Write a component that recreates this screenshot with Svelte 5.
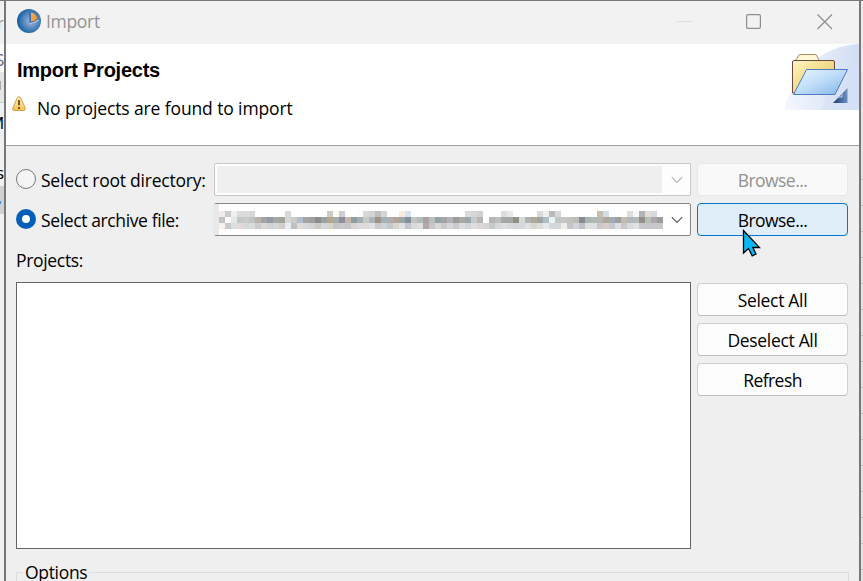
<script>
  const top = {0:'#f2eaea',1:'#cbcdcd',2:'#eef0f0',3:'#dadcdb',4:'#dadcdb',5:'#d5d8d3',11:'#d6d8d7',18:'#c8cdc8',19:'#fffff0',20:'#cdccd8',23:'#fffdf8',24:'#d8d8da',25:'#d1d4d4',26:'#bfbfbf',27:'#d5d5d5',30:'#fceadd',31:'#d5e2f0',41:'#dadcdb',42:'#dad5d5',43:'#cdd2d5',47:'#e0dfdd',48:'#e8e8e8',53:'#dadad6',54:'#f2eeea',55:'#b9b9bb',56:'#d8d8d8',63:'#c9bdb0',64:'#d2ddeb',68:'#e0dcda',69:'#f5f7fc',70:'#b2b5b5',71:'#e4ddd2',72:'#d3d8e5'};
  const mid = '#c3c2be #fff #e4e8e8 #c3c7c6 #c8cac8 #bfc5c0 #b9b2a8 #9fa5a8 #939ca1 #a4a9a8 #a3a49a #d4d7d5 #cbccc8 #aebdc9 #a3a4a4 #9f9f9e #8c8e8c #9da09e #afa894 #a4adac #8e8d9b #c4b7ad #8d9fa3 #a5afaf #c5c9c7 #aeb4b1 #9c9288 #a2b2b7 #b3adb2 #b1a598 #9ca6a7 #81919d #c3c6c2 #b6bcb9 #aaa1a8 #bcc0bc #94a3a5 #a4a5a7 #b0b4b4 #9c9c9b #a9aaa4 #9da8ad #c6cac8 #b6b7b5 #fff #b5b6b4 #bbc0bf #a6a8a4 #a6a6a5 #8f8f87 #d5dbd8 #b2b2b0 #b1a899 #9da5a9 #b3bec4 #e9f4fa #c4c6c5 #c5c7c5 #c4c2b8 #b9bdb5 #858b8f #aab3b0 #b3b9b5 #b6b8b6 #b2a699 #9faaba #9da09f #c4baaf #abb7c1 #b5bbb7 #91908b #b7bfb6 #afa6ad #999b9c'.split(' ');
  const low = '#f8f0eb #c8cacd #dcdde0 #e3d9d8 #d5d9d9 #d8dadb #cdcccc #dfd8d2 #ccd3d8 #d6d6d7 #d5ccca #e8eff3 #bfc0c1 #dedddb #d5d8da #d4d4d5 #cfcac8 #d1d8dc #d9d3c9 #c3c5c8 #c9c9c9 #c4c7c9 #d9d4d0 #dadde0 #e1dad9 #dee1e5 #cccaca #cad3d9 #c4c7cb #d9d6ce #e0e2e3 #c2c6ce #d9d9d9 #e0dfe0 #b3a7aa #c4c7cd #dbd9d6 #c8cacc #d6d7dc #cbcaca #dadcdd #cfd5da #dededf #dfd7d5 #d2d5d9 #c8c9cb #d3d8dc #dedfe0 #d8dadb #d3d7dc #d5d7de #dee0e1 #d9d5cf #dddddc #e4eaf0 #d8d8d8 #d3d8df #f3ebe6 #c3c5cb #d3d4db #bec2c7 #dfe1e0 #dfe0e0 #c8c8c8 #d8cdc9 #c6c9cf #dce0e4 #c9c9cb #d7dce1 #dfe1e3 #c9c7c9 #c5c6cb #cac7cc #c7c6c9'.split(' ');
  const cells = [...mid.map((_, i) => top[i] ?? '#fff'), ...mid, ...low];
  const lines = Array.from({ length: 16 }, (_, i) => 179 + i * 26);
</script>

{#snippet chevron(color)}
  <svg class="chev" width="12" height="8" viewBox="0 0 12 8"><path d="M.8 1.2 6 6.4 11.2 1.2" fill="none" stroke={color} stroke-width="1.1" /></svg>
{/snippet}

<div class="screen">
  <div class="behind left">
    <span class="frag" style="top:12px;color:#999">r</span>
    <i class="bg1"></i>
    <span class="frag blue" style="top:49px">S</span>
    <i class="bg2"></i>
    <i class="stub"></i>
    <span class="frag" style="top:112px;left:-11px">M</span>
    <span class="frag" style="top:162px;left:-4px">s</span>
    <i class="sel"></i>
    <i class="tick"></i>
  </div>
  <main>
    <header class="title">
      <svg class="logo" width="24" height="24" viewBox="0 0 24 24">
        <defs>
          <radialGradient id="ball" cx=".58" cy=".5" r=".6"><stop offset="0" stop-color="#a9b9e1" /><stop offset=".45" stop-color="#628fc4" /><stop offset="1" stop-color="#09599c" /></radialGradient>
          <linearGradient id="pie" x2="1" y2="1"><stop stop-color="#f3b263" /><stop offset="1" stop-color="#e8921c" /></linearGradient>
        </defs>
        <circle cx="12" cy="12" r="12" fill="url(#ball)" />
        <path d="M12.3 15V3C18 3 21 6 21.3 11Q17 15.5 12.3 15Z" fill="#416da5" />
        <path d="M14 12.5V3.4Q19.5 4.6 20.5 9.5Q17 12.8 14 12.5Z" fill="url(#pie)" />
        <path d="M12.3 14.7Q18 14 21.5 11" fill="none" stroke="#b3c2e6" stroke-width="1.5" />
      </svg>
      <span class="t name">Import</span>
      <div class="controls">
        <svg width="16" height="16" viewBox="0 0 16 16"><path d="M0 7.5H15" stroke="#dedede" /></svg>
        <svg width="16" height="16" viewBox="0 0 16 16"><rect x=".6" y=".6" width="13.8" height="13.8" rx="1.3" fill="none" stroke="#8e8e8e" stroke-width="1.2" /></svg>
        <svg width="16" height="16" viewBox="0 0 16 16"><path d="M.5.5 15 15M15 .5.5 15" stroke="#8e8e8e" stroke-width="1.2" /></svg>
      </div>
    </header>
    <section class="banner">
      <div class="copy">
        <h1>Import Projects</h1>
        <div class="msg">
          <svg width="14" height="16" viewBox="0 0 14 16"><defs><linearGradient id="warn" x2="0" y2="1"><stop stop-color="#fff0bd" /><stop offset="1" stop-color="#f6c251" /></linearGradient></defs><path d="M7 .7Q8.3.7 9 2.4L13 11.5Q14 14.4 11.7 14.5H2.3Q0 14.4 1 11.5L5 2.4Q5.700.7 7 .7Z" fill="url(#warn)" stroke="#d69b4e" /><path d="M7 4V9.2M7 11V13" stroke="#6b4a18" stroke-width="1.8" /></svg>
          <span class="t wide">No projects are found to import</span>
        </div>
      </div>
      <svg class="wizard" width="75" height="66" viewBox="0 0 75 66">
        <defs>
          <linearGradient id="haze"><stop stop-color="#f4f7fd" /><stop offset="1" stop-color="#d3def4" /></linearGradient>
          <linearGradient id="yellow" x2="1" y2="1"><stop stop-color="#fff7c8" /><stop offset=".3" stop-color="#f6e59b" /><stop offset="1" stop-color="#e5c45e" /></linearGradient>
          <linearGradient id="blue" x2="1" y2="1"><stop stop-color="#e8f6ff" /><stop offset=".5" stop-color="#bddcf8" /><stop offset="1" stop-color="#80b3e8" /></linearGradient>
          <linearGradient id="corner" x2="1"><stop stop-color="#173b78" /><stop offset="1" stop-color="#6f91c2" /></linearGradient>
        </defs>
        <path d="M0 66Q5 42 26 20Q48 1 75 0V66Z" fill="url(#haze)" />
        <path d="M38 66Q45 30 75 20V66Z" fill="#d5e0f5" opacity=".5" />
        <path d="M11 17 15.500 10.500H32L35.500 17" fill="#fff8d5" stroke="#aa8d63" />
        <path d="M8.500 49V18Q8.500 16.500 10 16.500H49Q50.500 16.500 50.500 18V49Z" fill="url(#yellow)" stroke="#6d4941" />
        <path d="M22.500 25.500H63.500L51 50.500H9.500Z" fill="url(#blue)" stroke="#5078c3" />
        <path d="M63.500 44V59H49Z" fill="url(#corner)" />
        <path d="M52 53H58V49" fill="none" stroke="#c7d7ee" />
      </svg>
    </section>
    <section class="form">
      <div class="row">
        <label><i class="radio"></i><span class="t root">Select root directory:</span></label>
        <div class="combo off"><span class="field"></span>{@render chevron('#b4b4b4')}</div>
        <button class="t tight disabled" disabled>Browse...</button>
      </div>
      <div class="row">
        <label><i class="radio on"></i><span class="t archive">Select archive file:</span></label>
        <div class="combo"><span class="edge"></span><span class="mosaic">{#each cells as c}<i style="background:{c}"></i>{/each}</span>{@render chevron('#555')}</div>
        <button class="t tight focus">Browse...</button>
      </div>
      <div class="t projects">Projects:</div>
      <div class="body">
        <div class="list"></div>
        <div class="side"><button class="t">Select All</button><button class="t">Deselect All</button><button class="t tight">Refresh</button></div>
      </div>
      <fieldset><legend class="t">Options</legend></fieldset>
    </section>
  </main>
  <div class="behind right">{#each lines as y}<i style="top:{y}px"></i>{/each}</div>
  <svg class="cursor" width="20" height="29" viewBox="0 0 20 29"><path d="M1.500 1.500V24L6.500 19.500 10.200 26.800 14 25 10.800 18.500H17.500Z" fill="#08b7f5" stroke="#000" stroke-width="1.3" /></svg>
</div>

<style>
  :global(body) { overflow: hidden; }
  .screen { position: relative; display: flex; width: 863px; height: 581px; overflow: hidden; background: #efefef; font: 18px/24px "Open Sans", "Noto Sans", sans-serif; color: #000; }
  .screen * { box-sizing: border-box; }
  svg { display: block; flex: none; }
  .t { font-size: 17.5px; letter-spacing: -.32px; white-space: nowrap; }
  .wide { letter-spacing: -.12px; }
  .root { letter-spacing: -.23px; }
  .archive { letter-spacing: -.38px; }
  .tight { letter-spacing: -.55px; }
  .behind { position: relative; flex: none; overflow: hidden; border-top: 1px solid #777; }
  .left { width: 4px; background: #eff0f2; }
  .right { width: 2px; background: linear-gradient(#ececec 71px, #e4e4e4 72px); }
  .behind i { position: absolute; left: 0; width: 5px; }
  .right i { height: 1px; background: #bcbcbc; margin-top: -1px; }
  .frag { position: absolute; left: -3px; z-index: 1; font-size: 17px; line-height: 20px; }
  .blue { color: #667; left: -5px; }
  .bg1 { top: 43px; height: 28px; background: #fafafa; }
  .left .bg1 { border-bottom: 0; }
  .bg2 { top: 71px; height: 31px; background: #e5e5e5; border-bottom: 1px solid #ccc; }
  .left .stub { top: 80px; width: 1px; height: 9px; background: #aaa; }
  .sel { top: 185px; height: 28px; background: #cfd0d2; }
  .left .tick { top: 200px; width: 1px; height: 3px; background: #3f8fd6; }
  main { width: 857px; height: 581px; flex: none; display: flex; flex-direction: column; border: 2px solid #777; border-top-width: 1px; border-bottom: 0; overflow: hidden; }
  .title { height: 43px; flex: none; display: flex; align-items: center; background: #f2f2f2; padding-left: 11px; color: #949494; }
  .logo { margin-top: -3px; }
  .name { margin: -3px 0 0 5px; }
  .controls { display: flex; gap: 54px; margin: -1px 26px 0 auto; }
  .controls svg:nth-child(1) { margin-right: -1px; }
  .controls svg:nth-child(2) { margin-right: 1px; }
  .banner { height: 102px; flex: none; display: flex; justify-content: space-between; background: #fff; border-bottom: 1px solid #a0a0a0; }
  h1 { margin: 14px 0 0 11px; font: bold 20px/24px "Liberation Sans", Arial, sans-serif; letter-spacing: -.25px; }
  .msg { display: flex; margin: 14px 0 0 6px; gap: 11px; }
  .form { display: flex; flex-direction: column; padding: 17px 11px 0 10px; }
  .row { display: flex; height: 33px; margin-bottom: 7px; }
  label { display: flex; flex: none; width: 198px; height: 33px; align-items: center; gap: 5px; }
  .radio { width: 20px; height: 20px; margin-top: -1px; border: 1px solid #777; border-radius: 50%; background: #f5f5f5; }
  .radio.on { border: 6px solid #005fb8; background: #fff; }
  .combo { width: 477px; height: 33px; flex: none; display: flex; align-items: center; border: 1px solid #868686; border-radius: 2px; background: #fff; }
  .combo.off { border-color: #c8c8c8; background: #fdfdfd; }
  .field { width: 445px; height: 27px; margin-left: 2px; background: #efefef; }
  .chev { margin: 0 7px 0 auto; }
  .edge { width: 6px; height: 31px; margin-left: -2px; background: #e9e9e9; }
  .mosaic { display: grid; grid-template-columns: repeat(74, 6px); grid-template-rows: repeat(3, 6px); width: 444px; }
  .mosaic i { width: 6px; height: 6px; }
  button { width: 151px; height: 33px; flex: none; margin: 0 0 0 6px; padding: 0; border: 1px solid #d0d0d0; border-bottom-color: #bcbcbc; border-radius: 4px; background: #fdfdfd; font-family: inherit; color: #000; }
  .disabled { background: #f9f9f9; border-color: #e8e8e8; color: #929292; }
  .focus { background: #e0eef9; border-color: #0078d4; }
  .projects { height: 39px; padding-top: 5px; }
  .body { display: flex; height: 267px; }
  .list { width: 675px; flex: none; height: 267px; border: 1px solid #646464; background: #fff; }
  .side { display: flex; flex-direction: column; gap: 7px; padding-top: 1px; }
  fieldset { width: 833px; height: 60px; margin: 11px 0 0; padding: 0 0 0 6px; border: 1px solid #dcdcdc; }
  legend { padding: 0 2px; letter-spacing: -.05px; }
  .cursor { position: absolute; left: 742px; top: 229px; }
</style>
